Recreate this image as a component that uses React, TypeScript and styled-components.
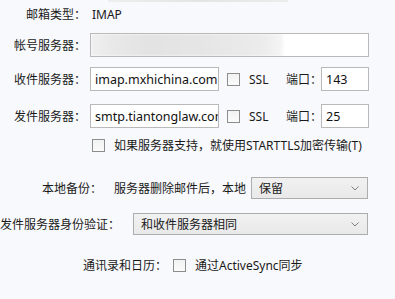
import React from "react";
import styled, { createGlobalStyle } from "styled-components";

const Global = createGlobalStyle`
  html, body { margin: 0; padding: 0; background: #f8f9fc; }
`;

const Page = styled.div`
  width: 395px;
  height: 299px;
  overflow: hidden;
  background: #f8f9fc;
  font-family: "Noto Sans", "Noto Sans CJK SC", sans-serif;
  font-size: 12px;
  color: #1a1a1a;
  display: flex;
  flex-direction: column;
`;

const Smudge = styled.div`
  margin-left: 108px;
  width: 180px;
  height: 2px;
  background: linear-gradient(to right, #eeeeee, #e4e4e4 50%, #ececec);
  flex: none;
`;

const Row = styled.div<{ $top: number; $h: number }>`
  display: flex;
  align-items: center;
  flex: none;
  margin-top: ${(p) => p.$top}px;
  height: ${(p) => p.$h}px;
  white-space: nowrap;
`;

const Label = styled.span<{ $w: number; $ml?: number; $align?: string }>`
  flex: none;
  width: ${(p) => p.$w}px;
  margin-left: ${(p) => p.$ml ?? 0}px;
  text-align: ${(p) => p.$align ?? "right"};
  white-space: nowrap;
`;

const Text = styled.span<{ $ml?: number; $w?: number }>`
  flex: none;
  margin-left: ${(p) => p.$ml ?? 0}px;
  ${(p) => (p.$w ? `width: ${p.$w}px;` : "")}
`;

const Field = styled.div<{ $ml: number; $w: number }>`
  flex: none;
  box-sizing: border-box;
  margin-left: ${(p) => p.$ml}px;
  width: ${(p) => p.$w}px;
  height: 24px;
  background: #ffffff;
  border: 1px solid #b9b9b9;
  padding: 0 4px;
  display: flex;
  align-items: center;
  overflow: hidden;
  font-size: 12.5px;
  color: #111;
`;

const Blur = styled.div`
  margin-left: -4px;
  width: 192px;
  height: 22px;
  background: linear-gradient(
    to right,
    #f0f0f0 0%,
    #e9e9e9 10%,
    #e3e3e3 30%,
    #e6e6e6 60%,
    #ececec 90%,
    #f6f6f6 100%
  );
  filter: blur(1px);
`;

const Box = styled.span<{ $ml: number }>`
  flex: none;
  box-sizing: border-box;
  margin-left: ${(p) => p.$ml}px;
  width: 13px;
  height: 13px;
  border: 1px solid #8d8d8d;
  background: linear-gradient(#f2f2f2, #fbfbfb);
`;

const Select = styled.div<{ $ml: number; $w: number }>`
  flex: none;
  box-sizing: border-box;
  margin-left: ${(p) => p.$ml}px;
  width: ${(p) => p.$w}px;
  height: 22px;
  border: 1px solid #adadad;
  background: linear-gradient(#f1f1f1, #e9e9e9);
  display: flex;
  align-items: center;
  padding: 0 8px 0 7px;
  font-size: 12px;
`;

const SelectText = styled.span`
  flex: 1;
`;

const Chevron = () => (
  <svg width="8" height="5" viewBox="0 0 8 5">
    <path d="M0.5 0.5 L4 4 L7.5 0.5" fill="none" stroke="#808080" strokeWidth="1" />
  </svg>
);

export default function App() {
  return (
    <Page>
      <Global />
      <Smudge />
      <Row $top={2} $h={20}>
        <Label $w={86}>邮箱类型：</Label>
        <Text $ml={6}>IMAP</Text>
      </Row>
      <Row $top={9} $h={24}>
        <Label $w={86}>帐号服务器：</Label>
        <Field $ml={4} $w={279}>
          <Blur />
        </Field>
      </Row>
      <Row $top={10} $h={24}>
        <Label $w={86}>收件服务器：</Label>
        <Field $ml={4} $w={129}>imap.mxhichina.com</Field>
        <Box $ml={8} />
        <Text $ml={9} $w={37}>SSL</Text>
        <Text $w={35}>端口：</Text>
        <Field $ml={0} $w={48}>143</Field>
      </Row>
      <Row $top={13} $h={24}>
        <Label $w={86}>发件服务器：</Label>
        <Field $ml={4} $w={129}>smtp.tiantonglaw.com</Field>
        <Box $ml={8} />
        <Text $ml={9} $w={37}>SSL</Text>
        <Text $w={35}>端口：</Text>
        <Field $ml={0} $w={48}>25</Field>
      </Row>
      <Row $top={7} $h={20}>
        <Box $ml={92} />
        <Text $ml={9}>如果服务器支持，就使用STARTTLS加密传输(T)</Text>
      </Row>
      <Row $top={22} $h={22}>
        <Label $w={102}>本地备份：</Label>
        <Text $ml={12} $w={137}>服务器删除邮件后，本地</Text>
        <Select $ml={0} $w={117}>
          <SelectText>保留</SelectText>
          <Chevron />
        </Select>
      </Row>
      <Row $top={14} $h={22}>
        <Label $w={120}>发件服务器身份验证：</Label>
        <Select $ml={13} $w={235}>
          <SelectText>和收件服务器相同</SelectText>
          <Chevron />
        </Select>
      </Row>
      <Row $top={20} $h={20}>
        <Label $w={84} $ml={83} $align="left">通讯录和日历：</Label>
        <Box $ml={6} />
        <Text $ml={9}>通过ActiveSync同步</Text>
      </Row>
    </Page>
  );
}
